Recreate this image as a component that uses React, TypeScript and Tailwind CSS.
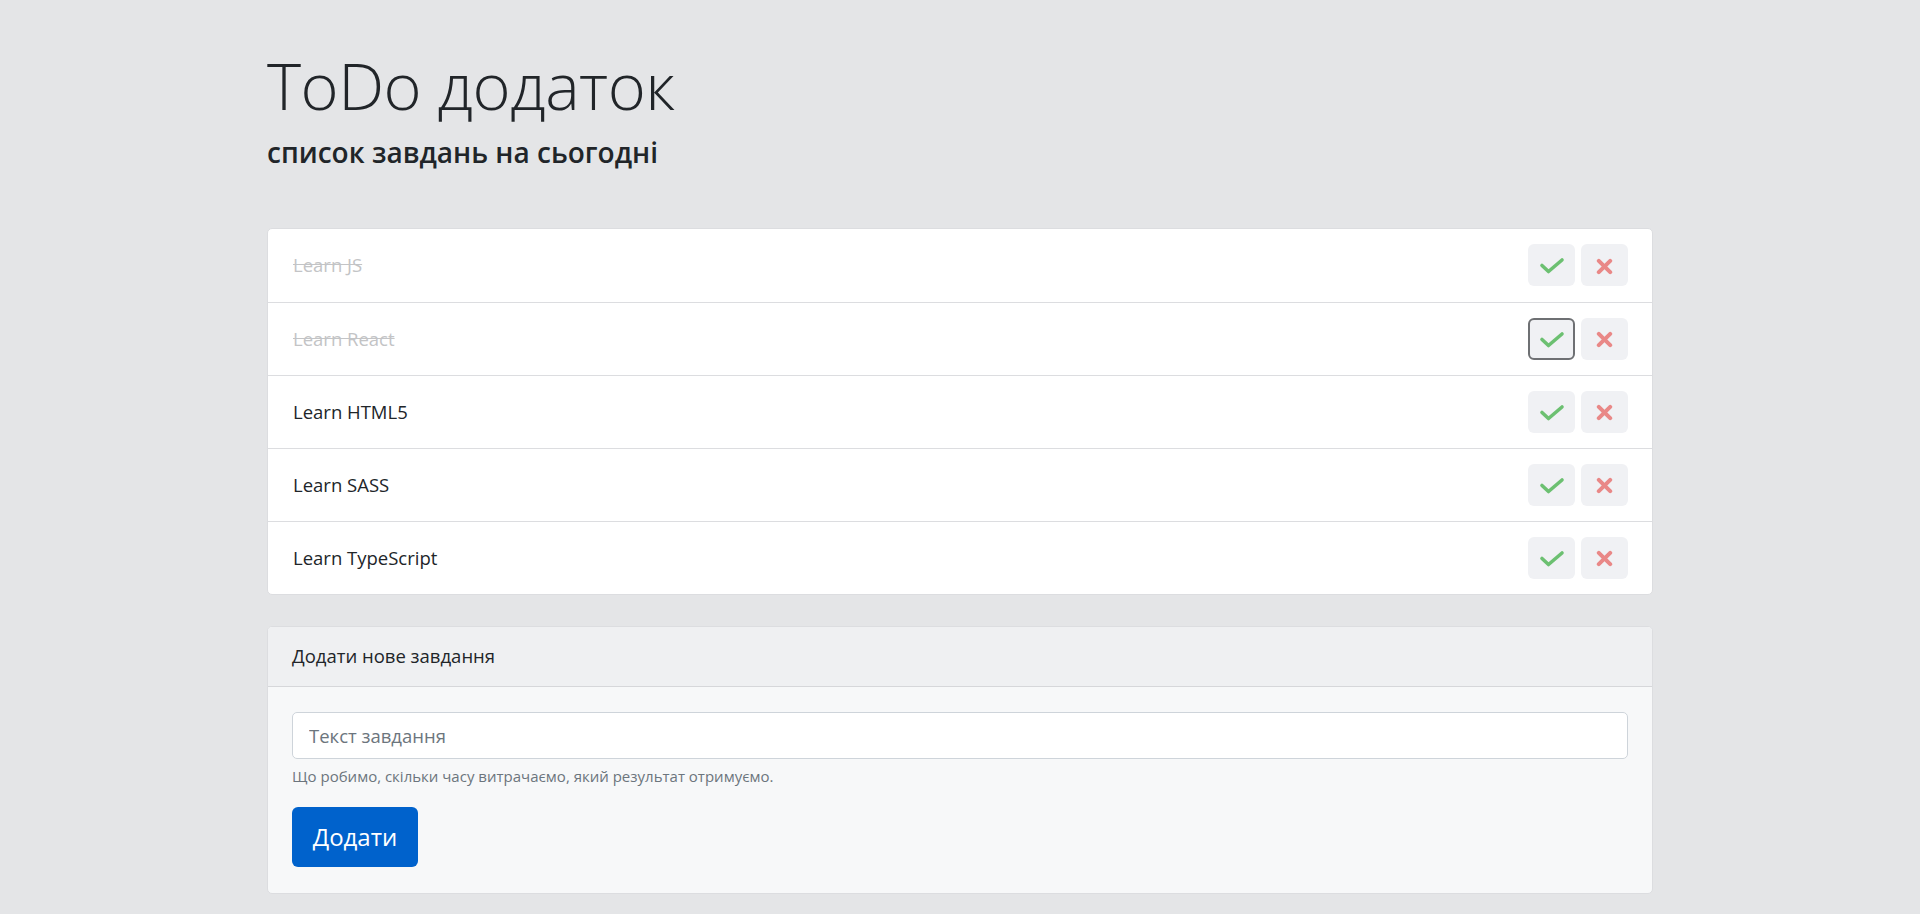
import React from "react";

const todos = [
  { text: "Learn JS", done: true },
  { text: "Learn React", done: true, focused: true },
  { text: "Learn HTML5", done: false },
  { text: "Learn SASS", done: false },
  { text: "Learn TypeScript", done: false },
];

function CheckIcon() {
  return (
    <svg width="26" height="18" viewBox="0 0 26 18" className="translate-y-[1px]">
      <polyline
        points="3,8.5 9.5,14.5 23,3"
        fill="none"
        stroke="#6cc071"
        strokeWidth="3.6"
        strokeLinecap="round"
        strokeLinejoin="round"
      />
    </svg>
  );
}

function XIcon() {
  return (
    <svg width="17" height="17" viewBox="0 0 17 17" className="translate-y-[1px]">
      <g stroke="#e98887" strokeWidth="4" strokeLinecap="round">
        <line x1="2.8" y1="2.8" x2="14.2" y2="14.2" />
        <line x1="14.2" y1="2.8" x2="2.8" y2="14.2" />
      </g>
    </svg>
  );
}

export default function App() {
  return (
    <div
      className="min-h-[914px] w-full bg-[#e4e5e7] text-[#212529]"
      style={{ fontFamily: '"Open Sans", "Noto Sans", sans-serif' }}
    >
      <div className="mx-auto w-[1386px] pt-[46px]">
        <h1 className="text-[65px] font-light leading-[1.2] tracking-[-0.5px] text-[#212529]">
          ToDo додаток
        </h1>
        <h3 className="mt-[12px] text-[28px] font-semibold leading-[1.2] text-[#212529]">
          список завдань на сьогодні
        </h3>

        <ul className="mt-[58px] overflow-hidden rounded-[5px] border border-[#dcdde0] bg-white">
          {todos.map((t, i) => (
            <li
              key={i}
              className={
                "flex h-[73px] items-center justify-between pl-[25px] pr-[24px] " +
                (i > 0 ? "border-t border-[#dcdde0]" : "")
              }
            >
              <span
                className={
                  "text-[18.5px] " +
                  (t.done ? "text-[#c3c4c6] line-through" : "text-[#212529]")
                }
              >
                {t.text}
              </span>
              <div className="flex gap-[6px]">
                <button
                  className={
                    "flex h-[42px] w-[47px] items-center justify-center rounded-[6px] bg-[#f0f1f4] " +
                    (t.focused ? "border-2 border-[#6e7073]" : "")
                  }
                >
                  <CheckIcon />
                </button>
                <button className="flex h-[42px] w-[47px] items-center justify-center rounded-[6px] bg-[#f0f1f4]">
                  <XIcon />
                </button>
              </div>
            </li>
          ))}
        </ul>

        <div className="mt-[31px] overflow-hidden rounded-[5px] border border-[#dcdde0] bg-[#f7f8f9]">
          <div className="flex h-[60px] items-center border-b border-[#d6d7da] bg-[#eff0f2] px-[24px] text-[18.5px] text-[#212529]">
            Додати нове завдання
          </div>
          <div className="px-[24px] pb-[26px] pt-[25px]">
            <input
              placeholder="Текст завдання"
              className="h-[47px] w-full rounded-[5px] border border-[#ced4da] bg-white px-[16px] text-[18.5px] text-[#212529] placeholder:text-[#6c757d] outline-none"
            />
            <div className="mt-[6px] text-[15px] text-[#6c757d]">
              Що робимо, скільки часу витрачаємо, який результат отримуємо.
            </div>
            <button className="mt-[20px] flex h-[60px] w-[126px] items-center justify-center rounded-[6px] bg-[#0062cc] text-[24px] text-white">
              Додати
            </button>
          </div>
        </div>
      </div>
    </div>
  );
}
